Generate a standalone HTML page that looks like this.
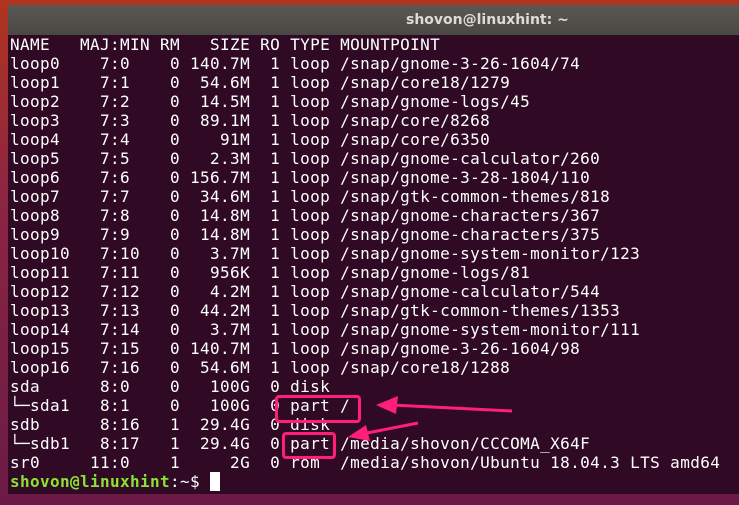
<!DOCTYPE html><html><head><style>
body{margin:0;width:739px;height:505px;overflow:hidden;background:linear-gradient(180deg,#b0341f 0%,#8c2443 40%,#6a1b45 100%);position:relative;font-family:"DejaVu Sans Mono","Liberation Mono",monospace}
#win{position:absolute;left:8px;top:5px;width:760px;height:489px;background:#300a24}
#tb{height:30px;background:linear-gradient(#5a5852,#4a4843);color:#dfdbd2;font:bold 14px "DejaVu Sans","Liberation Sans",sans-serif;line-height:30px;padding-left:398px}
pre{margin:0;position:absolute;left:2px;top:30px;font-size:16px;letter-spacing:0.37px;line-height:19px;color:#fff;font-family:"DejaVu Sans Mono",monospace}
.g{color:#8ae234;font-weight:bold}.c{background:#fff}
.box{position:absolute;border:3px solid #ff1f7a;border-radius:4px}
</style></head><body>
<div id="win"><div id="tb">shovon@linuxhint: ~</div>
<pre>NAME   MAJ:MIN RM   SIZE RO TYPE MOUNTPOINT
loop0    7:0    0 140.7M  1 loop /snap/gnome-3-26-1604/74
loop1    7:1    0  54.6M  1 loop /snap/core18/1279
loop2    7:2    0  14.5M  1 loop /snap/gnome-logs/45
loop3    7:3    0  89.1M  1 loop /snap/core/8268
loop4    7:4    0    91M  1 loop /snap/core/6350
loop5    7:5    0   2.3M  1 loop /snap/gnome-calculator/260
loop6    7:6    0 156.7M  1 loop /snap/gnome-3-28-1804/110
loop7    7:7    0  34.6M  1 loop /snap/gtk-common-themes/818
loop8    7:8    0  14.8M  1 loop /snap/gnome-characters/367
loop9    7:9    0  14.8M  1 loop /snap/gnome-characters/375
loop10   7:10   0   3.7M  1 loop /snap/gnome-system-monitor/123
loop11   7:11   0   956K  1 loop /snap/gnome-logs/81
loop12   7:12   0   4.2M  1 loop /snap/gnome-calculator/544
loop13   7:13   0  44.2M  1 loop /snap/gtk-common-themes/1353
loop14   7:14   0   3.7M  1 loop /snap/gnome-system-monitor/111
loop15   7:15   0 140.7M  1 loop /snap/gnome-3-26-1604/98
loop16   7:16   0  54.6M  1 loop /snap/core18/1288
sda      8:0    0   100G  0 disk 
└─sda1   8:1    0   100G  0 part /
sdb      8:16   1  29.4G  0 disk 
└─sdb1   8:17   1  29.4G  0 part /media/shovon/CCCOMA_X64F
sr0     11:0    1     2G  0 rom  /media/shovon/Ubuntu 18.04.3 LTS amd64
<span class="g">shovon@linuxhint</span>:~$ <span class="c"> </span></pre></div>
<div class="box" style="left:275px;top:395px;width:80px;height:22px"></div>
<div class="box" style="left:282px;top:432px;width:48px;height:21px"></div>
<svg style="position:absolute;left:0;top:0" width="739" height="505">
<line x1="512" y1="411" x2="392" y2="405" stroke="#ff1f7a" stroke-width="3"/>
<polygon points="376,405 398,396 396,414" fill="#ff1f7a"/>
<line x1="418" y1="423" x2="362" y2="434" stroke="#ff1f7a" stroke-width="3"/>
<polygon points="348,437 366,425 370,441" fill="#ff1f7a"/>
</svg>
</body></html>
